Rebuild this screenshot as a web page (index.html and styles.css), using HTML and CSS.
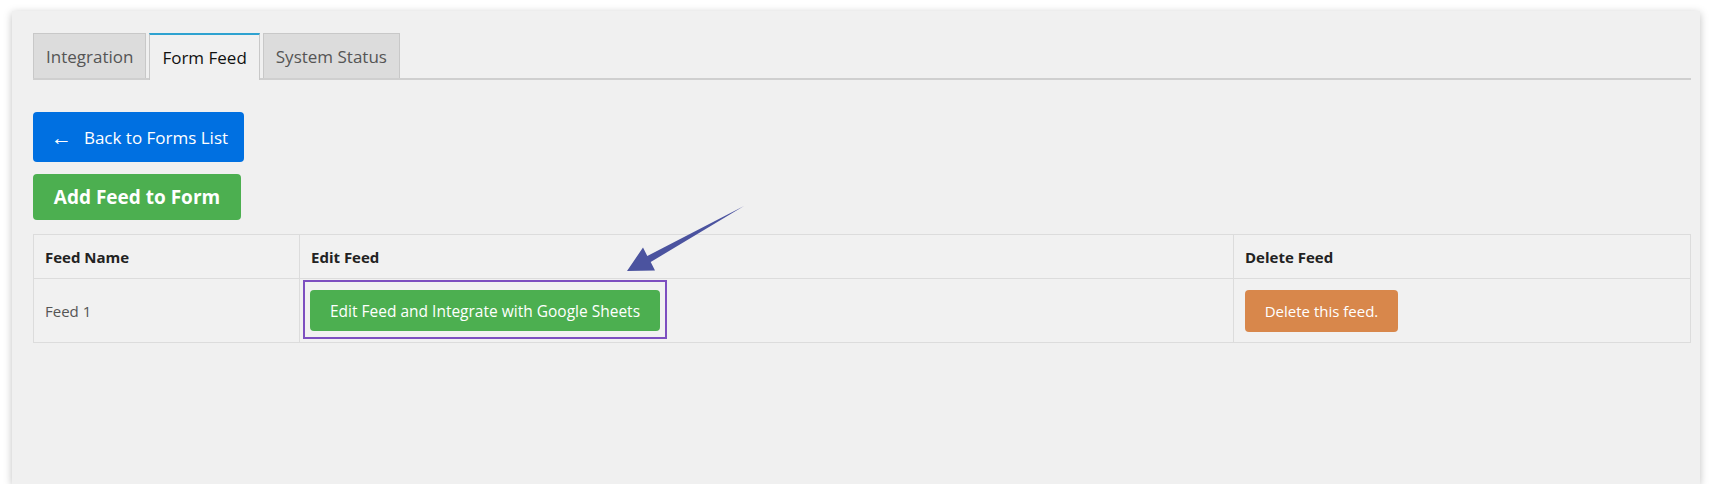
FILE: index.html
```html
<!DOCTYPE html>
<html lang="en">
<head>
  <meta charset="UTF-8" />
  <title>Form Feed</title>
  <meta name="viewport" content="width=device-width, initial-scale=1.0" />
  <link rel="stylesheet" href="styles.css">
</head>
<body>
  <div class="panel">
    <div class="tabs">
      <a class="tab">Integration</a>
      <a class="tab active">Form Feed</a>
      <a class="tab">System Status</a>
    </div>

    <div class="actions">
      <a class="btn btn-back"><span class="arrow">&larr;</span>Back to Forms List</a>
      <a class="btn btn-add">Add Feed to Form</a>
    </div>

    <table class="feeds">
      <thead>
        <tr>
          <th class="col-name">Feed Name</th>
          <th>Edit Feed</th>
          <th class="col-delete">Delete Feed</th>
        </tr>
      </thead>
      <tbody>
        <tr>
          <td>Feed 1</td>
          <td class="edit-cell">
            <span class="highlight"><a class="btn btn-edit">Edit Feed and Integrate with Google Sheets</a></span>
          </td>
          <td><a class="btn btn-delete">Delete this feed.</a></td>
        </tr>
      </tbody>
    </table>
  </div>

  <!-- annotation arrow -->
  <svg class="pointer" viewBox="620 200 130 80" width="130" height="80">
    <polygon points="744,206 650.7,262 655,270.5 627,271 643,247.5 647.3,256" fill="#4b539f" />
  </svg>
</body>
</html>
```

FILE: styles.css
```css
body { margin: 0; background: #fff; font-family: "Open Sans", "Noto Sans", sans-serif; color: #222; }
.panel { margin: 11px 0 0 12px; width: 1688px; height: 473px; box-sizing: border-box; padding: 22px 9px 0 21px; background: #f0f0f0; box-shadow: 0 2px 8px rgba(0,0,0,0.25); }

.tabs { display: flex; gap: 3px; border-bottom: 2px solid #cfcfcf; height: 45px; }
.tab { display: flex; align-items: center; box-sizing: border-box; height: 45px; padding: 0 12px; background: #dcdcdc; border: 1px solid #c8c8c8; border-bottom: none; color: #555; font-size: 17px; font-weight: 500; }
.tab.active { background: #f0f0f0; color: #111; border-top: 2px solid #2ea2d0; height: 47px; margin-bottom: -2px; }

.actions { display: flex; flex-direction: column; align-items: flex-start; gap: 12px; margin-top: 32px; }
.btn { display: inline-flex; align-items: center; justify-content: center; box-sizing: border-box; color: #fff; border-radius: 4px; text-decoration: none; }
.btn-back { width: 211px; height: 50px; background: #0070e1; font-size: 17px; padding-left: 2px; }
.btn-back .arrow { margin-right: 12px; font-size: 21px; line-height: 1; }
.btn-add { width: 208px; height: 46px; background: #4caf50; font-size: 19px; font-weight: 700; }

.feeds { margin-top: 14px; width: 100%; border-collapse: collapse; table-layout: fixed; background: #f1f1f1; }
.feeds th, .feeds td { border: 1px solid #dcdcdc; text-align: left; padding: 0 11px; vertical-align: middle; }
.feeds th { height: 43px; font-size: 15px; font-weight: 700; color: #222; }
.feeds td { height: 61px; font-size: 15px; color: #555; }
.col-name { width: 243px; }
.col-delete { width: 434px; }
.feeds td.edit-cell { padding: 0 3px 2px; }

.highlight { display: inline-block; border: 2px solid #7d4fc0; padding: 8px 5px 6px; }
.btn-edit { width: 350px; height: 41px; background: #4caf50; font-size: 15.5px; }
.btn-delete { width: 153px; height: 42px; background: #d8874b; font-size: 15px; }

.pointer { position: absolute; left: 620px; top: 200px; }
```
